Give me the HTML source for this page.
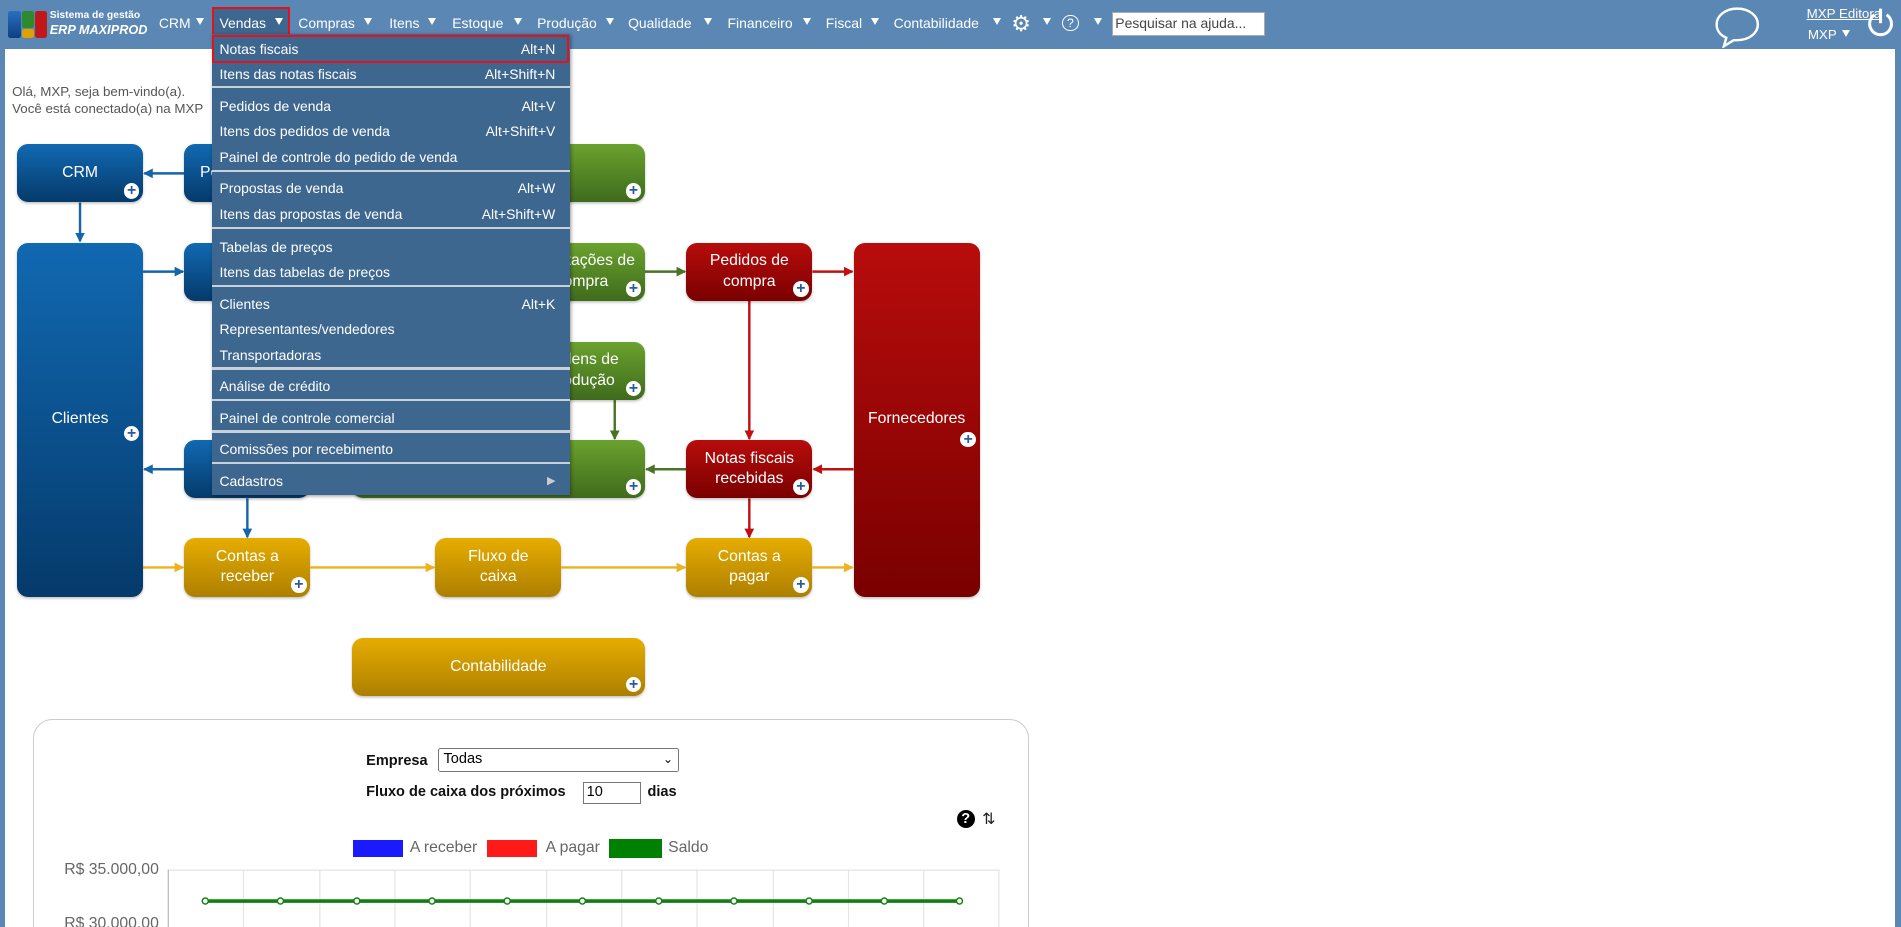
<!DOCTYPE html>
<html><head><meta charset="utf-8">
<style>
html,body{margin:0;padding:0;width:1901px;height:927px;overflow:hidden;background:#5b87b4;}
#w{zoom:1.2125;position:relative;width:1568px;height:765px;font-family:"Liberation Sans",sans-serif;}
.nav{position:absolute;top:0;left:0;width:1568px;height:40px;background:#5b87b4;}
.ni{position:absolute;top:12px;color:#fff;font-size:11.5px;}
.tri{position:absolute;top:15px;width:0;height:0;border-left:4px solid transparent;border-right:4px solid transparent;border-top:6px solid #fff;}
.content{position:absolute;left:4px;top:40px;width:1559px;height:725px;background:#fff;}
.box{position:absolute;border-radius:9px;color:#fff;font-size:13px;text-align:center;display:flex;align-items:center;justify-content:center;line-height:17px;box-shadow:0 1px 2px rgba(0,0,0,.25);}
.b{background:linear-gradient(#1169b2,#053a6b);}
.g{background:linear-gradient(#6aa22e,#3f6b1c);}
.r{background:linear-gradient(#b80c0c,#7a0000);}
.y{background:linear-gradient(#e6ad00,#ad7f00);}
.plus{position:absolute;right:3px;bottom:3px;width:13px;height:13px;border-radius:50%;background:#fff;color:#2a5a9a;font-size:13px;line-height:13px;text-align:center;font-weight:bold;}
.menu{position:absolute;left:175px;top:28px;width:295px;height:380px;background:#3e6790;box-shadow:1px 1px 3px rgba(0,0,0,.4);}
.mi{position:absolute;left:6px;right:12px;color:#fff;font-size:11.5px;height:16px;line-height:16px;}
.mi span{position:absolute;right:0;}
.sep{position:absolute;left:0;right:0;height:2px;background:#c8d0d8;}
.gl{position:absolute;font-size:13px;color:#555;}
</style></head><body><div id="w">
<div class="nav">
 <div style="position:absolute;left:7px;top:9px;width:10px;height:22px;background:linear-gradient(#2a70c0,#0c3f85);border-radius:2px"></div>
 <div style="position:absolute;left:18px;top:9px;width:10px;height:14px;background:#2d8a2d;border-radius:2px"></div>
 <div style="position:absolute;left:18px;top:24px;width:10px;height:7px;background:#e0a000;border-radius:2px"></div>
 <div style="position:absolute;left:29px;top:9px;width:10px;height:22px;background:#c01818;border-radius:2px"></div>
 <div style="position:absolute;left:41px;top:8px;color:#fff;font-size:8.5px;font-weight:bold">Sistema de gestão</div>
 <div style="position:absolute;left:41px;top:18px;color:#fff;font-size:10.5px;font-weight:bold;font-style:italic">ERP MAXIPROD</div>
 <div class="ni" style="left:131px">CRM</div><div class="tri" style="left:162px"></div>
 <div style="position:absolute;left:175px;top:6px;width:61px;height:23px;background:#3e6790;border:2px solid #e8101a"></div>
 <div class="ni" style="left:181px">Vendas</div><div class="tri" style="left:227px"></div>
 <div class="ni" style="left:246px">Compras</div><div class="tri" style="left:300px"></div>
 <div class="ni" style="left:321px">Itens</div><div class="tri" style="left:353px"></div>
 <div class="ni" style="left:373px">Estoque</div><div class="tri" style="left:424px"></div>
 <div class="ni" style="left:443px">Produção</div><div class="tri" style="left:500px"></div>
 <div class="ni" style="left:518px">Qualidade</div><div class="tri" style="left:581px"></div>
 <div class="ni" style="left:600px">Financeiro</div><div class="tri" style="left:662px"></div>
 <div class="ni" style="left:681px">Fiscal</div><div class="tri" style="left:718px"></div>
 <div class="ni" style="left:737px">Contabilidade</div><div class="tri" style="left:819px"></div>
 <div class="ni" style="left:834px;top:9px;font-size:18px">⚙</div><div class="tri" style="left:860px"></div>
 <div style="position:absolute;left:876px;top:12px;width:12px;height:12px;border:1.5px solid #fff;border-radius:50%;color:#fff;font-size:10px;text-align:center;line-height:12px">?</div><div class="tri" style="left:902px"></div>
 <div style="position:absolute;left:917px;top:10px;background:#fff;border:1px solid #aaa;font-size:11.5px;line-height:18px;color:#444;padding-left:2px;box-sizing:border-box;width:126px;height:20px">Pesquisar na ajuda...</div>
 <svg style="position:absolute;left:1413px;top:4px" width="42" height="36"><path d="M20 3C10 3 3 9 3 16c0 5 3 9 8 11l-2 7 8-5c1 0 2 0 3 0 10 0 17-6 17-13S30 3 20 3z" fill="none" stroke="#fff" stroke-width="2"/></svg>
 <div style="position:absolute;left:1490px;top:5px;color:#fff;font-size:11px;text-decoration:underline">MXP Editora</div>
 <div style="position:absolute;left:1491px;top:22px;color:#fff;font-size:11px">MXP</div><div class="tri" style="left:1519px;top:25px"></div>
 <svg style="position:absolute;left:1539px;top:4px" width="24" height="28"><path d="M7 8a9 9 0 1 0 10 0" fill="none" stroke="#fff" stroke-width="2.5"/><line x1="12" y1="3" x2="12" y2="15" stroke="#fff" stroke-width="2.5"/></svg>
</div>
<div class="content"></div>
<div class="gl" style="left:10px;top:69px;font-size:11px">Olá, MXP, seja bem-vindo(a).</div>
<div class="gl" style="left:10px;top:83px;font-size:11px">Você está conectado(a) na MXP</div>

<svg style="position:absolute;left:0;top:0" width="900" height="600">
<defs>
<marker id="mb" markerWidth="8" markerHeight="8" refX="7" refY="4" orient="auto" markerUnits="userSpaceOnUse"><path d="M0 0L8 4L0 8z" fill="#1565a8"/></marker>
<marker id="mg" markerWidth="8" markerHeight="8" refX="7" refY="4" orient="auto" markerUnits="userSpaceOnUse"><path d="M0 0L8 4L0 8z" fill="#4a7424"/></marker>
<marker id="mr" markerWidth="8" markerHeight="8" refX="7" refY="4" orient="auto" markerUnits="userSpaceOnUse"><path d="M0 0L8 4L0 8z" fill="#c01010"/></marker>
<marker id="my" markerWidth="8" markerHeight="8" refX="7" refY="4" orient="auto" markerUnits="userSpaceOnUse"><path d="M0 0L8 4L0 8z" fill="#edb21e"/></marker>
</defs>
<g stroke-width="2" fill="none">
<line x1="152" y1="143" x2="119" y2="143" stroke="#1565a8" marker-end="url(#mb)"/>
<line x1="66" y1="167" x2="66" y2="199" stroke="#1565a8" marker-end="url(#mb)"/>
<line x1="118" y1="224" x2="151" y2="224" stroke="#1565a8" marker-end="url(#mb)"/>
<line x1="152" y1="387" x2="119" y2="387" stroke="#1565a8" marker-end="url(#mb)"/>
<line x1="204" y1="411" x2="204" y2="443" stroke="#1565a8" marker-end="url(#mb)"/>
<line x1="532" y1="224" x2="565" y2="224" stroke="#4a7424" marker-end="url(#mg)"/>
<line x1="507" y1="330" x2="507" y2="362" stroke="#4a7424" marker-end="url(#mg)"/>
<line x1="566" y1="387" x2="533" y2="387" stroke="#4a7424" marker-end="url(#mg)"/>
<line x1="670" y1="224" x2="703" y2="224" stroke="#c01010" marker-end="url(#mr)"/>
<line x1="618" y1="248" x2="618" y2="362" stroke="#c01010" marker-end="url(#mr)"/>
<line x1="704" y1="387" x2="671" y2="387" stroke="#c01010" marker-end="url(#mr)"/>
<line x1="618" y1="411" x2="618" y2="443" stroke="#c01010" marker-end="url(#mr)"/>
<line x1="118" y1="468" x2="151" y2="468" stroke="#edb21e" marker-end="url(#my)"/>
<line x1="256" y1="468" x2="358" y2="468" stroke="#edb21e" marker-end="url(#my)"/>
<line x1="463" y1="468" x2="565" y2="468" stroke="#edb21e" marker-end="url(#my)"/>
<line x1="670" y1="468" x2="703" y2="468" stroke="#edb21e" marker-end="url(#my)"/>
</g></svg>

<div class="box b" style="left:14px;top:119px;width:104px;height:48px">CRM<div class="plus">+</div></div>
<div class="box b" style="left:152px;top:119px;width:104px;height:48px;justify-content:flex-start;padding-left:13px;box-sizing:border-box">Pedidos<div class="plus">+</div></div>
<div class="box g" style="left:428px;top:119px;width:104px;height:48px"><div class="plus">+</div></div>
<div class="box b" style="left:14px;top:200px;width:104px;height:292px">Clientes<div class="plus" style="bottom:128px">+</div></div>
<div class="box b" style="left:152px;top:200px;width:104px;height:48px">Propostas<div class="plus">+</div></div>
<div class="box g" style="left:428px;top:200px;width:104px;height:48px">Solicitações de<br>compra<div class="plus">+</div></div>
<div class="box r" style="left:566px;top:200px;width:104px;height:48px">Pedidos de<br>compra<div class="plus">+</div></div>
<div class="box r" style="left:704px;top:200px;width:104px;height:292px">Fornecedores<div class="plus" style="bottom:123px">+</div></div>
<div class="box g" style="left:428px;top:282px;width:104px;height:48px">Ordens de<br>produção<div class="plus">+</div></div>
<div class="box b" style="left:152px;top:363px;width:104px;height:48px">Notas<div class="plus">+</div></div>
<div class="box g" style="left:290px;top:363px;width:242px;height:48px">Estoque<div class="plus">+</div></div>
<div class="box r" style="left:566px;top:363px;width:104px;height:48px">Notas fiscais<br>recebidas<div class="plus">+</div></div>
<div class="box y" style="left:152px;top:444px;width:104px;height:48px">Contas a<br>receber<div class="plus">+</div></div>
<div class="box y" style="left:359px;top:444px;width:104px;height:48px">Fluxo de<br>caixa</div>
<div class="box y" style="left:566px;top:444px;width:104px;height:48px">Contas a<br>pagar<div class="plus">+</div></div>
<div class="box y" style="left:290px;top:526px;width:242px;height:48px">Contabilidade<div class="plus">+</div></div>

<div class="menu">
 <div style="position:absolute;left:0;top:1px;width:291px;height:20px;border:2px solid #e8101a"></div>
 <div class="mi" style="top:5px">Notas fiscais<span>Alt+N</span></div>
 <div class="mi" style="top:26px">Itens das notas fiscais<span>Alt+Shift+N</span></div>
 <div class="sep" style="top:43px"></div>
 <div class="mi" style="top:52px">Pedidos de venda<span>Alt+V</span></div>
 <div class="mi" style="top:73px">Itens dos pedidos de venda<span>Alt+Shift+V</span></div>
 <div class="mi" style="top:94px">Painel de controle do pedido de venda</div>
 <div class="sep" style="top:112px"></div>
 <div class="mi" style="top:120px">Propostas de venda<span>Alt+W</span></div>
 <div class="mi" style="top:141px">Itens das propostas de venda<span>Alt+Shift+W</span></div>
 <div class="sep" style="top:159px"></div>
 <div class="mi" style="top:168px">Tabelas de preços</div>
 <div class="mi" style="top:189px">Itens das tabelas de preços</div>
 <div class="sep" style="top:207px"></div>
 <div class="mi" style="top:215px">Clientes<span>Alt+K</span></div>
 <div class="mi" style="top:236px">Representantes/vendedores</div>
 <div class="mi" style="top:257px">Transportadoras</div>
 <div class="sep" style="top:275px"></div>
 <div class="mi" style="top:283px">Análise de crédito</div>
 <div class="sep" style="top:301px"></div>
 <div class="mi" style="top:309px">Painel de controle comercial</div>
 <div class="sep" style="top:327px"></div>
 <div class="mi" style="top:335px">Comissões por recebimento</div>
 <div class="sep" style="top:353px"></div>
 <div class="mi" style="top:361px">Cadastros<span style="font-size:9px;color:#ccc">▶</span></div>
</div>

<div style="position:absolute;left:27px;top:593px;width:820px;height:200px;border:1px solid #ccc;border-radius:16px;background:#fff"></div>
<div style="position:absolute;left:302px;top:621px;font-size:12px;font-weight:bold;color:#111">Empresa</div>
<div style="position:absolute;left:361px;top:617px;width:199px;height:20px;box-sizing:border-box;border:1px solid #777;border-radius:2px;font-size:12px;line-height:18px;padding-left:4px">Todas<span style="position:absolute;right:4px;font-size:10px">⌄</span></div>
<div style="position:absolute;left:302px;top:647px;font-size:12px;font-weight:bold;color:#111">Fluxo de caixa dos próximos</div>
<div style="position:absolute;left:481px;top:645px;width:48px;height:18px;box-sizing:border-box;border:1px solid #777;font-size:12px;line-height:16px;padding-left:2px">10</div>
<div style="position:absolute;left:534px;top:647px;font-size:12px;font-weight:bold;color:#111">dias</div>
<div style="position:absolute;left:789px;top:668px;width:15px;height:15px;border-radius:50%;background:#000;color:#fff;font-size:12px;font-weight:bold;text-align:center;line-height:15px">?</div>
<div style="position:absolute;left:810px;top:667px;font-size:13px;color:#222">⇅</div>
<div style="position:absolute;left:291px;top:693px;width:41px;height:14px;background:#1a1aff"></div>
<div style="position:absolute;left:338px;top:692px;font-size:13px;color:#666">A receber</div>
<div style="position:absolute;left:402px;top:693px;width:41px;height:14px;background:#ff1a1a"></div>
<div style="position:absolute;left:450px;top:692px;font-size:13px;color:#666">A pagar</div>
<div style="position:absolute;left:502px;top:692px;width:44px;height:16px;background:#008000"></div>
<div style="position:absolute;left:551px;top:692px;font-size:13px;color:#666">Saldo</div>
<div style="position:absolute;left:53px;top:710px;font-size:13px;color:#666">R$ 35.000,00</div>
<div style="position:absolute;left:53px;top:755px;font-size:13px;color:#666">R$ 30.000,00</div>
<svg style="position:absolute;left:130px;top:710px" width="700" height="60">
<line x1="8" y1="7.5" x2="693" y2="7.5" stroke="#e4e4e4"/>
<g stroke="#e4e4e4">
<line x1="8.5" y1="7" x2="8.5" y2="60" stroke="#bbb"/><line x1="70.5" y1="7" x2="70.5" y2="60"/><line x1="133.5" y1="7" x2="133.5" y2="60"/><line x1="195.5" y1="7" x2="195.5" y2="60"/><line x1="257.5" y1="7" x2="257.5" y2="60"/><line x1="320.5" y1="7" x2="320.5" y2="60"/><line x1="382.5" y1="7" x2="382.5" y2="60"/><line x1="444.5" y1="7" x2="444.5" y2="60"/><line x1="507.5" y1="7" x2="507.5" y2="60"/><line x1="569.5" y1="7" x2="569.5" y2="60"/><line x1="631.5" y1="7" x2="631.5" y2="60"/><line x1="693.5" y1="7" x2="693.5" y2="60"/>
</g>
<line x1="39" y1="33" x2="661" y2="33" stroke="#108010" stroke-width="3"/>
<g fill="#fff" stroke="#108010" stroke-width="1.2">
<circle cx="39" cy="33" r="2.5"/><circle cx="101" cy="33" r="2.5"/><circle cx="164" cy="33" r="2.5"/><circle cx="226" cy="33" r="2.5"/><circle cx="288" cy="33" r="2.5"/><circle cx="350" cy="33" r="2.5"/><circle cx="413" cy="33" r="2.5"/><circle cx="475" cy="33" r="2.5"/><circle cx="537" cy="33" r="2.5"/><circle cx="599" cy="33" r="2.5"/><circle cx="661" cy="33" r="2.5"/>
</g></svg>
</div></body></html>
